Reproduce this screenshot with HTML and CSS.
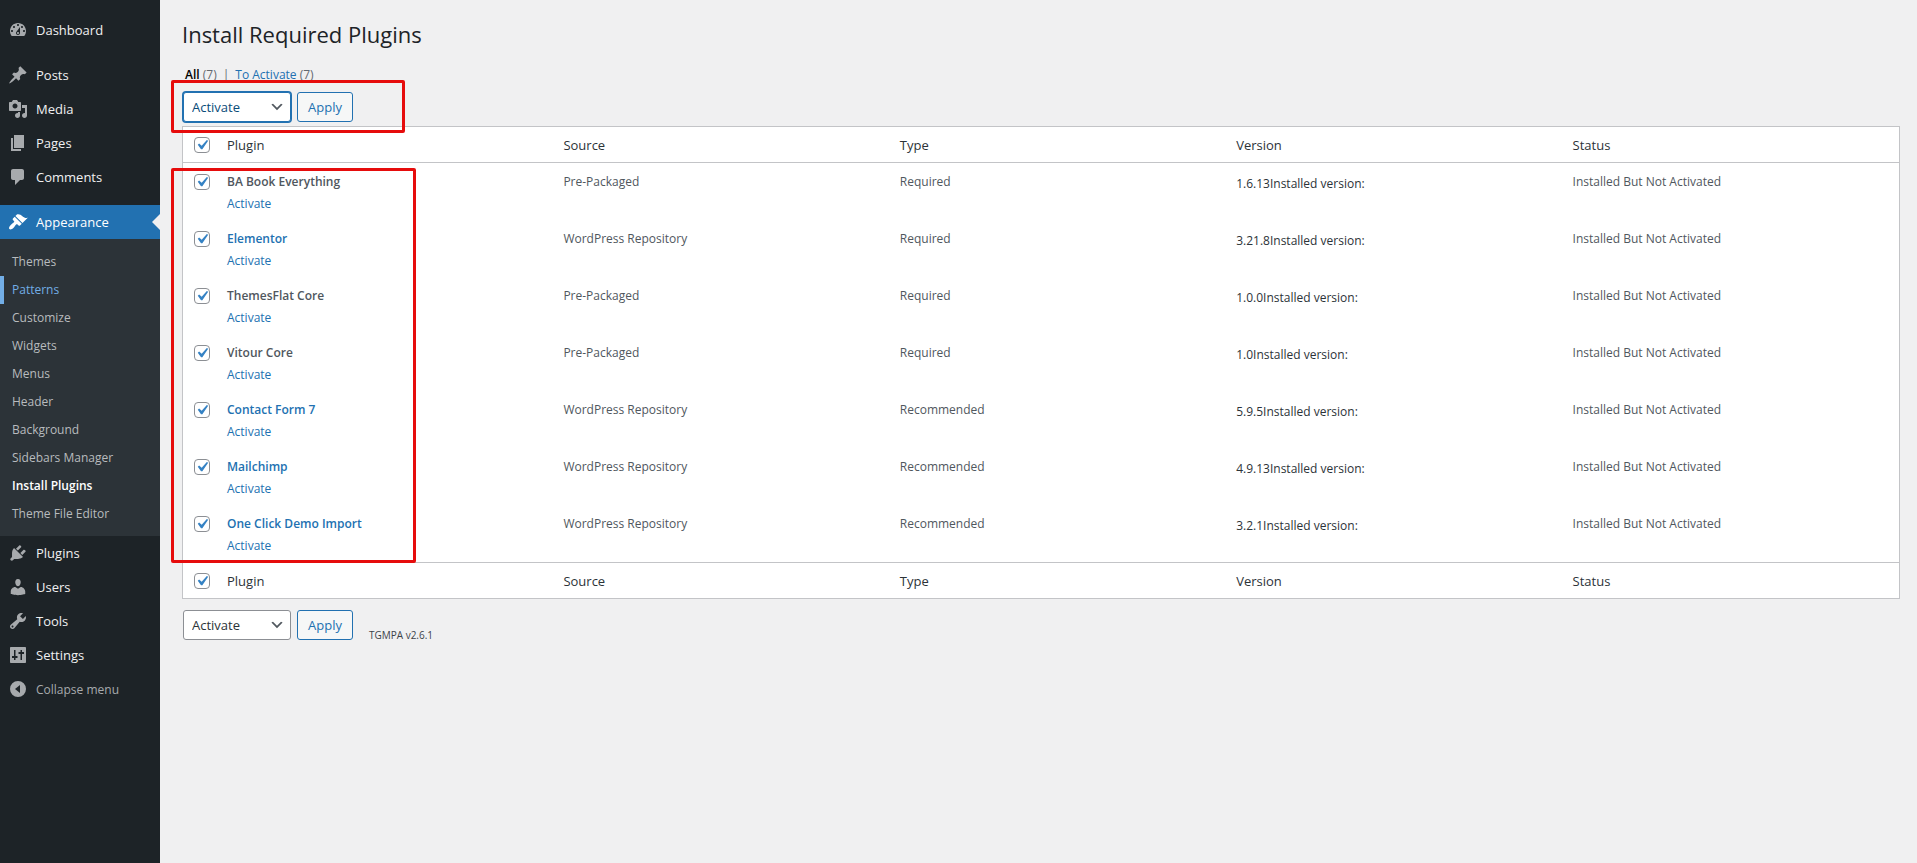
FILE: index.html
```html
<!DOCTYPE html>
<html lang="en">
<head>
    <meta charset="UTF-8">
    <meta name="viewport" content="width=device-width, initial-scale=1.0">
    <title>Install Required Plugins</title>
    <link rel="stylesheet" href="styles.css">
</head>
<body>
    <nav class="admin-menu" aria-label="Main menu">
        <ul class="menu">
            <li><a href="#"><svg viewBox="0 0 20 20"><path fill-rule="evenodd" d="M3.76 16h12.48c1.1-1.37 1.76-3.11 1.76-5 0-4.42-3.58-8-8-8s-8 3.58-8 8c0 1.89.66 3.63 1.76 5zM10 4c.55 0 1 .45 1 1s-.45 1-1 1-1-.45-1-1 .45-1 1-1zM6 6c.55 0 1 .45 1 1s-.45 1-1 1-1-.45-1-1 .45-1 1-1zm8 0c.55 0 1 .45 1 1s-.45 1-1 1-1-.45-1-1 .45-1 1-1zm-5.37 5.55L12 7v6c0 1.1-.9 2-2 2s-2-.9-2-2c0-.57.24-1.08.63-1.45zM4 10c.55 0 1 .45 1 1s-.45 1-1 1-1-.45-1-1 .45-1 1-1zm12 0c.55 0 1 .45 1 1s-.45 1-1 1-1-.45-1-1 .45-1 1-1zm-5 3c0-.55-.45-1-1-1s-1 .45-1 1 .45 1 1 1 1-.45 1-1z"/></svg>Dashboard</a></li>
            <li class="separator"></li>
            <li><a href="#"><svg viewBox="0 0 20 20"><path d="M10.44 3.02l1.82-1.82 6.36 6.35-1.83 1.82c-1.05-.68-2.48-.57-3.41.36l-.75.75c-.92.93-1.04 2.35-.35 3.41l-1.83 1.82-2.41-2.41-2.8 2.79c-.42.42-3.38 2.71-3.8 2.29s1.86-3.39 2.28-3.81l2.79-2.79L4.1 9.36l1.83-1.82c1.05.69 2.48.57 3.4-.36l.75-.75c.93-.92 1.05-2.35.36-3.41z"/></svg>Posts</a></li>
            <li><a href="#"><svg viewBox="0 0 20 20"><path fill-rule="evenodd" d="M13 11V4c0-.55-.45-1-1-1h-1.67L9 1H5L3.67 3H2c-.55 0-1 .45-1 1v7c0 .55.45 1 1 1h10c.55 0 1-.45 1-1zM7 4.5c1.38 0 2.5 1.12 2.5 2.5S8.38 9.5 7 9.5 4.5 8.38 4.5 7 5.62 4.5 7 4.5zM14 6h5v10.5c0 1.38-1.12 2.5-2.5 2.5S14 17.88 14 16.5s1.12-2.5 2.5-2.5c.17 0 .34.02.5.05V9h-3V6zm-4 8.05V13h2v3.5c0 1.38-1.12 2.5-2.5 2.5S7 17.88 7 16.5 8.12 14 9.5 14c.17 0 .34.02.5.05z"/></svg>Media</a></li>
            <li><a href="#"><svg viewBox="0 0 20 20"><path d="M6 15V2h10v13H6zm-1 1h8v2H3V5h2v11z"/></svg>Pages</a></li>
            <li><a href="#"><svg viewBox="0 0 20 20"><path d="M5 2h9c1.1 0 2 .9 2 2v7c0 1.1-.9 2-2 2h-2l-5 5v-5H5c-1.1 0-2-.9-2-2V4c0-1.1.9-2 2-2z"/></svg>Comments</a></li>
            <li class="separator"></li>
            <li class="current">
                <a href="#"><svg viewBox="0 0 20 20"><path d="M14.48 11.06L7.41 3.99l1.5-1.5c.5-.56 2.3-.47 3.51.32 1.21.8 1.43 1.28 2.91 2.1 1.18.64 2.45 1.26 4.45.85zm-.71.71L6.7 4.7 4.93 6.47c-.39.39-.39 1.02 0 1.41l1.06 1.06c.39.39.39 1.03 0 1.42-.6.6-1.43 1.11-2.21 1.69-.35.26-.7.53-1.01.84C1.43 14.23.4 16.08 1.4 17.07c.99 1 2.84-.03 4.18-1.36.31-.31.58-.66.85-1.02.57-.78 1.08-1.61 1.69-2.21.39-.39 1.02-.39 1.41 0l1.06 1.06c.39.39 1.02.39 1.41 0z"/></svg>Appearance</a>
                <ul class="submenu">
                    <li><a href="#">Themes</a></li>
                    <li><a href="#" class="hovered">Patterns</a></li>
                    <li><a href="#">Customize</a></li>
                    <li><a href="#">Widgets</a></li>
                    <li><a href="#">Menus</a></li>
                    <li><a href="#">Header</a></li>
                    <li><a href="#">Background</a></li>
                    <li><a href="#">Sidebars Manager</a></li>
                    <li><a href="#" class="active">Install Plugins</a></li>
                    <li><a href="#">Theme File Editor</a></li>
                </ul>
            </li>
            <li><a href="#"><svg viewBox="0 0 20 20"><path d="M13.11 4.36L9.87 7.6 8 5.73l3.24-3.24c.35-.34 1.05-.2 1.56.32.52.51.66 1.21.31 1.55zm-8 1.77l.91-1.12 9.01 9.01-1.19.84c-.71.71-2.63 1.16-3.82 1.16H6.14L4.9 17.26c-.59.59-1.54.59-2.12 0-.59-.58-.59-1.53 0-2.12l1.24-1.24v-3.88c0-1.13.4-3.19 1.09-3.89zm7.26 3.97l3.24-3.24c.34-.35 1.04-.21 1.55.31.52.51.66 1.21.31 1.55l-3.24 3.25z"/></svg>Plugins</a></li>
            <li><a href="#"><svg viewBox="0 0 20 20"><path d="M10 9.25c-2.27 0-2.73-3.44-2.73-3.44C7 4.02 7.82 2 9.97 2c2.16 0 2.98 2.02 2.71 3.81 0 0-.41 3.44-2.68 3.44zm0 2.57L12.72 10c2.39 0 4.52 2.33 4.52 4.53v2.49s-3.65 1.13-7.24 1.13c-3.65 0-7.24-1.13-7.24-1.13v-2.49c0-2.25 1.94-4.48 4.47-4.48z"/></svg>Users</a></li>
            <li><a href="#"><svg viewBox="0 0 20 20"><path fill-rule="evenodd" d="M16.68 9.77c-1.34 1.34-3.3 1.67-4.95.99l-5.41 6.52c-.99.99-2.59.99-3.58 0s-.99-2.59 0-3.57l6.52-5.42c-.68-1.65-.35-3.61.99-4.95 1.28-1.28 3.12-1.62 4.72-1.06l-2.89 2.89 2.82 2.82 2.86-2.87c.53 1.58.18 3.39-1.08 4.65zM3.81 16.21c.4.39 1.04.39 1.43 0 .4-.4.4-1.04 0-1.43-.39-.4-1.03-.4-1.43 0-.39.39-.39 1.03 0 1.43z"/></svg>Tools</a></li>
            <li><a href="#"><svg viewBox="0 0 20 20"><path fill-rule="evenodd" d="M3 2h14c.55 0 1 .45 1 1v14c0 .55-.45 1-1 1H3c-.55 0-1-.45-1-1V3c0-.55.45-1 1-1zM6 5v6H4v2h2v2h1.500v-2h2v-2h-2V5zM12.500 15V9h-2V7h2V5H14v2h2v2h-2v6z"/></svg>Settings</a></li>
            <li class="collapse"><button type="button"><svg viewBox="0 0 20 20"><path fill-rule="evenodd" d="M10 2a8 8 0 1 1 0 16 8 8 0 0 1 0-16zM12 6l-5 4 5 4z"/></svg>Collapse menu</button></li>
        </ul>
    </nav>

    <main class="content">
        <h1>Install Required Plugins</h1>

        <ul class="filters">
            <li><a href="#" class="selected">All</a> <span class="count">(7)</span></li>
            <li class="divider">|</li>
            <li><a href="#">To Activate</a> <span class="count">(7)</span></li>
        </ul>

        <form class="plugins-form">
            <div class="actions actions-top">
                <div class="select-wrap">
                    <select class="focused" aria-label="Select bulk action">
                        <option>Bulk actions</option>
                        <option selected>Activate</option>
                    </select>
                    <svg viewBox="0 0 20 20"><path d="M5 6l5 5 5-5 2 1-7 7-7-7 2-1z"/></svg>
                </div>
                <button type="button" class="button">Apply</button>
            </div>

            <table class="plugins">
                <thead>
                    <tr>
                        <td class="check"><input type="checkbox" aria-label="Select all" checked></td>
                        <th scope="col">Plugin</th>
                        <th scope="col">Source</th>
                        <th scope="col">Type</th>
                        <th scope="col">Version</th>
                        <th scope="col">Status</th>
                    </tr>
                </thead>
                <tbody>
                    <tr>
                        <td class="check"><input type="checkbox" aria-label="BA Book Everything" checked></td>
                        <td><strong>BA Book Everything</strong><a href="#" class="row-action">Activate</a></td>
                        <td>Pre-Packaged</td>
                        <td>Required</td>
                        <td class="version">1.6.13Installed version:</td>
                        <td>Installed But Not Activated</td>
                    </tr>
                    <tr>
                        <td class="check"><input type="checkbox" aria-label="Elementor" checked></td>
                        <td><strong><a href="#">Elementor</a></strong><a href="#" class="row-action">Activate</a></td>
                        <td>WordPress Repository</td>
                        <td>Required</td>
                        <td class="version">3.21.8Installed version:</td>
                        <td>Installed But Not Activated</td>
                    </tr>
                    <tr>
                        <td class="check"><input type="checkbox" aria-label="ThemesFlat Core" checked></td>
                        <td><strong>ThemesFlat Core</strong><a href="#" class="row-action">Activate</a></td>
                        <td>Pre-Packaged</td>
                        <td>Required</td>
                        <td class="version">1.0.0Installed version:</td>
                        <td>Installed But Not Activated</td>
                    </tr>
                    <tr>
                        <td class="check"><input type="checkbox" aria-label="Vitour Core" checked></td>
                        <td><strong>Vitour Core</strong><a href="#" class="row-action">Activate</a></td>
                        <td>Pre-Packaged</td>
                        <td>Required</td>
                        <td class="version">1.0Installed version:</td>
                        <td>Installed But Not Activated</td>
                    </tr>
                    <tr>
                        <td class="check"><input type="checkbox" aria-label="Contact Form 7" checked></td>
                        <td><strong><a href="#">Contact Form 7</a></strong><a href="#" class="row-action">Activate</a></td>
                        <td>WordPress Repository</td>
                        <td>Recommended</td>
                        <td class="version">5.9.5Installed version:</td>
                        <td>Installed But Not Activated</td>
                    </tr>
                    <tr>
                        <td class="check"><input type="checkbox" aria-label="Mailchimp" checked></td>
                        <td><strong><a href="#">Mailchimp</a></strong><a href="#" class="row-action">Activate</a></td>
                        <td>WordPress Repository</td>
                        <td>Recommended</td>
                        <td class="version">4.9.13Installed version:</td>
                        <td>Installed But Not Activated</td>
                    </tr>
                    <tr>
                        <td class="check"><input type="checkbox" aria-label="One Click Demo Import" checked></td>
                        <td><strong><a href="#">One Click Demo Import</a></strong><a href="#" class="row-action">Activate</a></td>
                        <td>WordPress Repository</td>
                        <td>Recommended</td>
                        <td class="version">3.2.1Installed version:</td>
                        <td>Installed But Not Activated</td>
                    </tr>
                </tbody>
                <tfoot>
                    <tr>
                        <td class="check"><input type="checkbox" aria-label="Select all" checked></td>
                        <th scope="col">Plugin</th>
                        <th scope="col">Source</th>
                        <th scope="col">Type</th>
                        <th scope="col">Version</th>
                        <th scope="col">Status</th>
                    </tr>
                </tfoot>
            </table>

            <div class="actions actions-bottom">
                <div class="select-wrap">
                    <select aria-label="Select bulk action">
                        <option>Bulk actions</option>
                        <option selected>Activate</option>
                    </select>
                    <svg viewBox="0 0 20 20"><path d="M5 6l5 5 5-5 2 1-7 7-7-7 2-1z"/></svg>
                </div>
                <button type="button" class="button">Apply</button>
                <span class="tgmpa">TGMPA v2.6.1</span>
            </div>

            <!-- Red frames over the form -->
            <div class="highlight highlight-actions"></div>
            <div class="highlight highlight-plugins"></div>
        </form>
    </main>
</body>
</html>
```
FILE: styles.css
```css
* {
    box-sizing: border-box;
}

body {
    margin: 0;
    display: flex;
    min-height: 100vh;
    background: #f0f0f1;
    color: #3c434a;
    font-family: "Segoe UI", "Open Sans", sans-serif;
    font-size: 12px;
    line-height: 18px;
}

a {
    color: #2271b1;
    text-decoration: none;
}

ul {
    list-style: none;
    margin: 0;
    padding: 0;
}

/* Left menu */
.admin-menu {
    flex: 0 0 160px;
    background: #1d2327;
    padding-top: 13px;
}

.menu > li > a,
.collapse button {
    display: flex;
    align-items: center;
    gap: 8px;
    width: 100%;
    height: 34px;
    padding: 0 8px;
    color: #f0f0f1;
    font-size: 13px;
}

.menu svg {
    flex: none;
    width: 20px;
    height: 20px;
    fill: #a7aaad;
}

.separator {
    height: 11px;
}

.menu > .current > a {
    position: relative;
    background: #2271b1;
    color: #fff;
}

.current svg {
    fill: #fff;
}

/* Arrow pointing into the menu */
.menu > .current > a::after {
    content: "";
    position: absolute;
    top: 9px;
    right: 0;
    border: 8px solid transparent;
    border-left-width: 0;
    border-right-color: #f0f0f1;
}

.submenu {
    background: #2c3338;
    padding: 9px 0 8px;
}

.submenu a {
    display: block;
    padding: 5px 12px;
    color: #b8bbbe;
}

.submenu .hovered {
    color: #72aee6;
    box-shadow: inset 4px 0 0 #72aee6;
}

.submenu .active {
    color: #fff;
    font-weight: 600;
}

.collapse button {
    border: 0;
    background: none;
    color: #a7aaad;
    font-family: inherit;
    font-size: 12px;
    cursor: pointer;
}

/* Page */
.content {
    flex: 1;
    min-width: 0;
    padding: 15px 17px 0 22px;
}

h1 {
    margin: 0;
    color: #1d2327;
    font-size: 22px;
    font-weight: 400;
    line-height: 38px;
}

.filters {
    display: flex;
    gap: 6px;
    margin-top: 13px;
    padding-left: 3px;
}

.filters .selected {
    color: #000;
    font-weight: 600;
}

.count,
.divider {
    color: #646970;
}

.plugins-form {
    position: relative;
}

.actions {
    display: flex;
    align-items: center;
    gap: 6px;
    padding-left: 1px;
}

.actions-top {
    padding-top: 8px;
    padding-bottom: 4px;
}

.actions-bottom {
    padding-top: 11px;
}

.select-wrap {
    display: grid;
    align-items: center;
}

.select-wrap select,
.select-wrap svg {
    grid-area: 1 / 1;
}

.select-wrap svg {
    justify-self: end;
    width: 16px;
    height: 16px;
    margin-right: 6px;
    fill: #50575e;
    pointer-events: none;
}

select {
    appearance: none;
    width: 108px;
    height: 30px;
    padding: 0 24px 0 8px;
    border: 1px solid #8c8f94;
    border-radius: 3px;
    background: #fff;
    color: #2c3338;
    font-family: inherit;
    font-size: 13px;
}

.focused {
    border-color: #2271b1;
    box-shadow: 0 0 0 1px #2271b1;
    color: #0a4b78;
}

.button {
    height: 30px;
    padding: 0 10px;
    border: 1px solid #2271b1;
    border-radius: 3px;
    background: #f6f7f7;
    color: #2271b1;
    font-family: inherit;
    font-size: 13px;
    cursor: pointer;
}

.tgmpa {
    align-self: flex-end;
    margin-bottom: -4px;
    padding-left: 10px;
    font-size: 10px;
}

/* Plugins table */
.plugins {
    width: 100%;
    table-layout: fixed;
    border: 1px solid #c3c4c7;
    border-spacing: 0;
    background: #fff;
}

.plugins td,
.plugins th {
    padding: 10px 10px 7px;
    text-align: left;
    vertical-align: top;
}

.plugins th {
    padding: 9px 10px 7px;
    color: #2c3338;
    font-size: 13px;
    font-weight: 400;
    line-height: 19px;
}

.plugins thead td,
.plugins thead th {
    border-bottom: 1px solid #c3c4c7;
}

.plugins tfoot td,
.plugins tfoot th {
    border-top: 1px solid #c3c4c7;
}

.plugins tbody td {
    height: 57px;
    color: #50575e;
}

.plugins .version {
    padding-top: 12px;
    color: #2c3338;
}

.plugins .check {
    width: 34px;
    padding: 11px 0 0 11px;
}

.plugins thead .check,
.plugins tfoot .check {
    padding-top: 10px;
}

.plugins strong {
    display: block;
    font-weight: 600;
}

.row-action {
    display: block;
    margin-top: 4px;
}

input[type="checkbox"] {
    appearance: none;
    display: block;
    width: 16px;
    height: 16px;
    margin: 0;
    border: 1px solid #8c8f94;
    border-radius: 4px;
    background: #fff url('data:image/svg+xml;utf8,<svg xmlns="http://www.w3.org/2000/svg" viewBox="0 0 20 20"><path d="M14.830 4.890l1.340.940-5.810 8.380H9.020L5.780 9.670l1.340-1.250 2.570 2.400z" fill="%233582c4"/></svg>') center / 20px no-repeat;
}

.highlight {
    position: absolute;
    border: 3px solid #e60c0c;
    border-radius: 2px;
    pointer-events: none;
}

.highlight-actions {
    top: -4px;
    left: -11px;
    width: 234px;
    height: 53px;
}

.highlight-plugins {
    top: 84px;
    left: -11px;
    width: 245px;
    height: 395px;
}
```
